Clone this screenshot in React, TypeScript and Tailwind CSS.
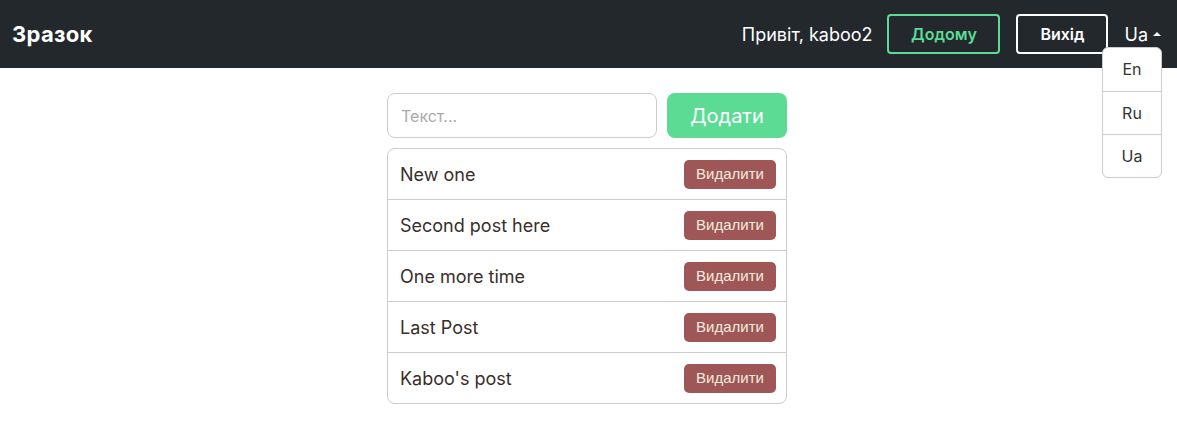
import React, { useState } from "react";

const posts = ["New one", "Second post here", "One more time", "Last Post", "Kaboo's post"];

const App = () => {
    const [text, setText] = useState("");

    return (
        <div className="min-h-[423px] bg-white font-['Inter',sans-serif]">
            {/* Навбар */}
            <nav className="flex h-[68px] items-center justify-between bg-[#23282c] pl-3 pr-4">
                <div className="text-[22px] font-bold tracking-[0.3px] text-white">Зразок</div>
                <div className="flex items-center">
                    <span className="mr-[15px] text-[18px] text-white">Привіт, kaboo2</span>
                    <button className="h-[40px] w-[113px] rounded-[4px] border-2 border-[#5cdb95] text-[16px] font-semibold text-[#5cdb95]">
                        Додому
                    </button>
                    <button className="ml-[16px] h-[40px] w-[92px] rounded-[4px] border-2 border-white text-[16px] font-semibold text-white">
                        Вихід
                    </button>
                    <div className="relative ml-[16px]">
                        <button className="flex items-center gap-[5px] text-[18px] text-white">
                            Ua
                            <span className="h-0 w-0 border-x-[4px] border-b-[4px] border-x-transparent border-b-white" />
                        </button>
                        <div className="absolute right-[-1px] top-[26px] z-10 w-[60px] overflow-hidden rounded-[6px] border border-[#ccc] bg-white">
                            {["En", "Ru", "Ua"].map((l, i) => (
                                <div
                                    key={l}
                                    className={`flex h-[43px] items-center justify-center text-[16px] text-[#333] ${i > 0 ? "border-t border-[#ccc]" : ""}`}
                                >
                                    {l}
                                </div>
                            ))}
                        </div>
                    </div>
                </div>
            </nav>

            {/* Форма і список */}
            <div className="mt-[25px] flex justify-center pr-[3px]">
                <div className="w-[400px]">
                    <div className="flex gap-[10px]">
                        <input
                            value={text}
                            onChange={(e) => setText(e.target.value)}
                            placeholder="Текст..."
                            className="h-[45px] w-[270px] rounded-[8px] border border-[#ccc] px-[13px] text-[16px] text-[#333] placeholder:text-[#aaa] focus:outline-none"
                        />
                        <button className="h-[45px] flex-1 rounded-[8px] bg-[#5cdb95] text-[20px] text-white">Додати</button>
                    </div>

                    <ul className="mt-[10px] overflow-hidden rounded-[8px] border border-[#ccc]">
                        {posts.map((p, i) => (
                            <li
                                key={p}
                                className={`flex items-center justify-between pl-[12px] pr-[10px] ${i > 0 ? "h-[51px] border-t border-[#ccc]" : "h-[50px]"}`}
                            >
                                <span className="text-[18px] text-[#3a2e2a]">{p}</span>
                                <button className="h-[29px] w-[92px] rounded-[5px] bg-[#9e5656] font-['Liberation_Sans',sans-serif] text-[15px] text-[#f5ecdf]">
                                    Видалити
                                </button>
                            </li>
                        ))}
                    </ul>
                </div>
            </div>
        </div>
    );
};

export default App;
